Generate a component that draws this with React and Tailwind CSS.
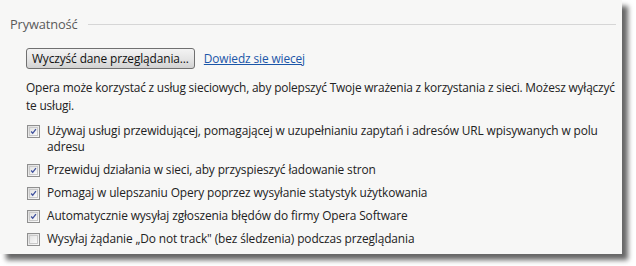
import { useState } from 'react';

const OPTIONS = [
  { label: 'Używaj usługi przewidującej, pomagającej w uzupełnianiu zapytań i adresów URL wpisywanych w polu adresu', checked: true },
  { label: 'Przewiduj działania w sieci, aby przyspieszyć ładowanie stron', checked: true },
  { label: 'Pomagaj w ulepszaniu Opery poprzez wysyłanie statystyk użytkowania', checked: true },
  { label: 'Automatycznie wysyłaj zgłoszenia błędów do firmy Opera Software', checked: true },
  { label: 'Wysyłaj żądanie „Do not track" (bez śledzenia) podczas przeglądania', checked: false },
];

function Checkbox({ checked, onChange }) {
  return (
    <button
      type="button"
      onClick={onChange}
      className="mt-[2px] flex h-[13px] w-[13px] shrink-0 items-center justify-center border border-[#8f8f8f] bg-gradient-to-br from-[#dcdcdc] to-[#fbfbfb] p-0"
    >
      <span className="flex h-[9px] w-[9px] items-center justify-center border border-[#c9c9c9] bg-gradient-to-br from-[#e3e3e3] to-[#fafafa]">
        {checked && (
          <svg width="9" height="9" viewBox="0 0 9 9" className="block">
            <path d="M1.5 4.5 L3.5 6.8 L7.6 1.4" fill="none" stroke="#3d4f9c" strokeWidth="1.7" />
          </svg>
        )}
      </span>
    </button>
  );
}

export default function App() {
  const [opts, setOpts] = useState(OPTIONS);

  const toggle = (i) => {
    setOpts(opts.map((o, j) => (j === i ? { ...o, checked: !o.checked } : o)));
  };

  return (
    <div className="h-[266px] w-[636px] bg-white" style={{ fontFamily: '"Open Sans", "Noto Sans", sans-serif' }}>
      <div className="h-[254px] w-[622px] bg-[#f7f7f6] pl-[10px] pr-[6px] pt-[15px] text-[11.9px] tracking-[-0.12px] text-[#222] shadow-[6px_6px_5px_rgba(0,0,0,0.6)]">
        <div className="flex items-center gap-[10px]">
          <span className="text-[12.8px] text-[#5a5a5a]">Prywatność</span>
          <div className="h-px flex-1 bg-[#d6d6d6]" />
        </div>

        <div className="pl-[16px]">
          <div className="mt-[14px] flex items-center gap-[9px]">
            <button
              type="button"
              className="h-[21px] rounded-[3px] border border-[#707070] bg-gradient-to-b from-[#f3f3f3] via-[#e6e6e6] to-[#d2d2d2] px-[5px] text-[11.9px] leading-none text-[#111]"
            >
              Wyczyść dane przeglądania...
            </button>
            <a href="#" className="text-[#1b56a8] underline">Dowiedz sie wiecej</a>
          </div>

          <p className="mr-[-6px] mt-[9px] leading-[18px] tracking-[-0.18px]">
            Opera może korzystać z usług sieciowych, aby polepszyć Twoje wrażenia z korzystania z sieci. Możesz wyłączyć te usługi.
          </p>

          <div className="mt-[9px] flex flex-col gap-[7.5px]">
            {opts.map((o, i) => (
              <label key={i} className="flex items-start gap-[7px] pl-px leading-[15.5px]">
                <Checkbox checked={o.checked} onChange={() => toggle(i)} />
                <span className="pr-[8px]">{o.label}</span>
              </label>
            ))}
          </div>
        </div>
      </div>
    </div>
  );
}
